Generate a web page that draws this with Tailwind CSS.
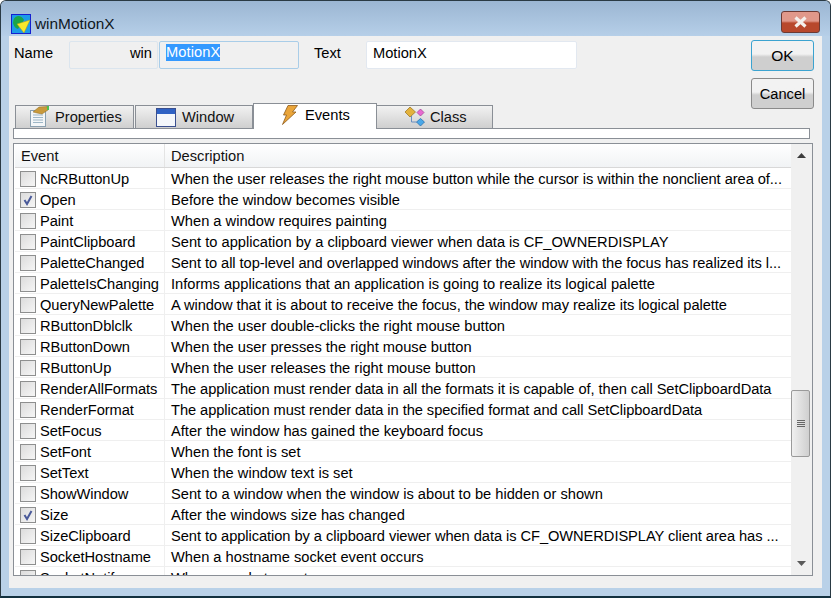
<!DOCTYPE html>
<html lang="en">
<head>
    <meta charset="UTF-8">
    <title>winMotionX</title>
    <script src="https://cdn.jsdelivr.net/npm/@tailwindcss/browser@4"></script>
</head>
<body class="w-[831px] h-[598px] overflow-hidden bg-white font-['Liberation_Sans',sans-serif] text-[14.67px] text-black">
    <!-- Window frame -->
    <div class="w-[831px] h-[598px] flex flex-col rounded-t-md border border-b-2 border-[#2a3a44] border-b-[#12313f] bg-[#b9d1e8] overflow-hidden">
        <!-- Title bar -->
        <div class="h-[35px] shrink-0 flex items-start justify-between pl-[10px] pr-[10px] bg-gradient-to-b from-[#9bb6d3] to-[#b6cfe8]">
            <div class="flex items-center gap-[4px] mt-[11px]">
                <svg width="20" height="20" viewBox="0 0 20 20">
                    <rect x="0.5" y="0.5" width="19" height="19" fill="#1c9be8" stroke="#1420d0" />
                    <path d="M2 9 Q2 3 7 2 Q11 2 13 6 L7 15 Q3 14 2 9Z" fill="#1aa54a" />
                    <path d="M6 10 L19 6 L13 19Z" fill="#f7e82a" stroke="#b09a10" stroke-width="0.5" />
                </svg>
                <span class="text-[15.4px] text-[#10181f]">winMotionX</span>
            </div>
            <div class="w-[39px] h-[22px] mt-[10px] rounded-[3px] border border-[#6b3a34] bg-gradient-to-b from-[#e0988a] from-45% to-[#b8482c] to-55% flex items-center justify-center">
                <svg width="15" height="12" viewBox="0 0 15 12">
                    <path d="M2.5 1.5 L12.5 10.5 M12.5 1.5 L2.5 10.5" stroke="#f4f0ec" stroke-width="3.2" />
                </svg>
            </div>
        </div>

        <!-- Client area -->
        <div class="ml-[8px] mr-[8px] mb-[8px] flex-1 bg-[#f0f0f0] flex flex-col pl-[4px] pr-[8px] min-h-0">
            <!-- Top fields and buttons -->
            <div class="h-[67px] shrink-0 flex items-start">
                <span class="w-[56px] pl-[1px] mt-[6px]">Name</span>
                <div class="w-[89px] h-[28px] mt-[5px] rounded-[2px] border border-[#dbe5ee] bg-[#f0f0f0] text-right pr-[5px] leading-[23px]">win</div>
                <div class="w-[140px] h-[28px] mt-[5px] ml-[1px] rounded-[2px] border border-[#a9cde8] bg-[#f0f0f0] pl-[6px] pt-[2px]"><span class="block w-fit bg-[#3399ff] text-white leading-[17px] tracking-[0.1px]">MotionX</span></div>
                <span class="w-[67px] pl-[15px] mt-[6px]">Text</span>
                <div class="w-[211px] h-[28px] mt-[5px] rounded-[2px] border border-[#e2e8f0] bg-white pl-[6px] leading-[23px]">MotionX</div>
                <div class="ml-auto flex flex-col gap-[7px] mt-[4px]">
                    <div class="w-[63px] h-[31px] rounded-[3px] border border-[#3ba3d0] bg-gradient-to-b from-[#f2f2f2] from-45% to-[#cfcfcf] to-55% flex items-center justify-center text-[15.5px]">OK</div>
                    <div class="w-[63px] h-[31px] rounded-[3px] border border-[#8a8a8a] bg-gradient-to-b from-[#f2f2f2] from-45% to-[#cfcfcf] to-55% flex items-center justify-center">Cancel</div>
                </div>
            </div>

            <!-- Tabs -->
            <div class="h-[25px] shrink-0 flex items-end pl-[2px]">
                <div class="w-[119px] h-[23px] flex items-center border border-b-0 border-[#8a8f96] bg-gradient-to-b from-[#f2f2f2] to-[#cfcfcf] pl-[13px] gap-[5px]">
                    <svg class="-mt-[2px]" width="21" height="21" viewBox="0 0 21 21">
                        <rect x="1.5" y="4.5" width="15" height="16" fill="#f3f6f8" stroke="#8aa0b0" />
                        <path d="M4 9H14M4 11.5H14M4 14H14M4 16.5H14" stroke="#9db6c6" />
                        <path d="M4 6 L10 1 L18 0.5 L19 4 L13 8 L8 7Z" fill="#c99a3c" stroke="#8d6a22" stroke-width="0.5" />
                        <rect x="18" y="0" width="2" height="4" fill="#4fc04f" />
                    </svg>
                    <span class="text-[#111]">Properties</span>
                </div>
                <div class="w-[118px] h-[23px] ml-[1px] flex items-center border border-b-0 border-[#8a8f96] bg-gradient-to-b from-[#f2f2f2] to-[#cfcfcf] pl-[20px] gap-[6px]">
                    <svg width="20" height="19" viewBox="0 0 20 19">
                        <rect x="0.5" y="0.5" width="19" height="18" fill="#f4f7fb" stroke="#3a4f8f" />
                        <rect x="1" y="1" width="18" height="5" fill="#2f62c4" />
                    </svg>
                    <span class="text-[#111]">Window</span>
                </div>
                <div class="w-[124px] h-[26px] -mb-[1px] relative flex items-center border border-b-0 border-[#8a8f96] bg-white pl-[27px] gap-[6px] pb-[3px]">
                    <svg width="18" height="20" viewBox="0 0 18 20">
                        <path d="M7 0.5 H16.5 L11.5 7 H15 L1.5 19.5 L5.5 10 H2.5Z" fill="#eaa53a" stroke="#8d5a1c" stroke-width="0.8" />
                    </svg>
                    <span>Events</span>
                </div>
                <div class="w-[116px] h-[23px] flex items-center border border-l-0 border-b-0 border-[#8a8f96] bg-gradient-to-b from-[#f2f2f2] to-[#cfcfcf] pl-[27px] gap-[4px]">
                    <svg class="-mt-[2px]" width="22" height="21" viewBox="0 0 22 21">
                        <path d="M6 1 L11.5 6 L6 11 L1 6Z" fill="#e3b23c" stroke="#96701a" stroke-width="0.7" />
                        <path d="M16.5 3 L20 6.5 L16.5 10 L13 6.5Z" fill="#e86ad0" stroke="#a03b92" stroke-width="0.7" />
                        <path d="M16.5 12.5 L20.5 16 L16.5 20 L12.5 16Z" fill="#4aa8e8" stroke="#2068a8" stroke-width="0.7" />
                        <path d="M7.5 10 V16 H13" fill="none" stroke="#6a8fc0" />
                    </svg>
                    <span class="text-[#111]">Class</span>
                </div>
            </div>

            <!-- Tab page strip -->
            <div class="h-[11px] shrink-0 w-[797px] border border-[#8a8f96] bg-white"></div>

            <!-- Event table -->
            <div class="mt-[4px] w-[800px] h-[433px] shrink-0 flex border border-[#8a8f96] bg-white overflow-hidden">
                <div class="flex-1 min-w-0 flex flex-col pl-[1px]">
                    <div class="h-[24px] shrink-0 flex items-center border-b border-[#d8d8d8] bg-gradient-to-b from-white to-[#f1f3f5]">
                        <div class="w-[150px] h-full pl-[6px] flex items-center border-r border-[#e4e4e4] text-[#111]">Event</div>
                        <div class="pl-[6px] text-[#111]">Description</div>
                    </div>
                    <div id="rows" class="flex-1 overflow-hidden"></div>
                </div>
                <!-- Scrollbar -->
                <div class="w-[21px] shrink-0 bg-[#f0f0f0] flex flex-col items-center relative">
                    <svg class="mt-[9px]" width="9" height="5" viewBox="0 0 9 5"><path d="M4.5 0 L9 5 H0Z" fill="#3c3c3c" /></svg>
                    <div class="absolute top-[246px] left-0 w-[19px] h-[67px] rounded-[2px] border border-[#9a9a9a] bg-gradient-to-r from-[#f0f0f0] to-[#cfcfcf] flex flex-col items-center justify-center gap-[1px]">
                        <div class="w-[8px] h-[1px] bg-[#666]"></div>
                        <div class="w-[8px] h-[1px] bg-[#666]"></div>
                        <div class="w-[8px] h-[1px] bg-[#666]"></div>
                        <div class="w-[8px] h-[1px] bg-[#666]"></div>
                    </div>
                    <svg class="absolute bottom-[9px]" width="9" height="5" viewBox="0 0 9 5"><path d="M0 0 H9 L4.5 5Z" fill="#5a5a5a" /></svg>
                </div>
            </div>
        </div>
    </div>

    <script>
        // Event name, description, checked
        const events = [
            ['NcRButtonUp', 'When the user releases the right mouse button while the cursor is within the nonclient area of...', false],
            ['Open', 'Before the window becomes visible', true],
            ['Paint', 'When a window requires painting', false],
            ['PaintClipboard', 'Sent to application by a clipboard viewer when data is CF_OWNERDISPLAY', false],
            ['PaletteChanged', 'Sent to all top-level and overlapped windows after the window with the focus has realized its l...', false],
            ['PaletteIsChanging', 'Informs applications that an application is going to realize its logical palette', false],
            ['QueryNewPalette', 'A window that it is about to receive the focus, the window may realize its logical palette', false],
            ['RButtonDblclk', 'When the user double-clicks the right mouse button', false],
            ['RButtonDown', 'When the user presses the right mouse button', false],
            ['RButtonUp', 'When the user releases the right mouse button', false],
            ['RenderAllFormats', 'The application must render data in all the formats it is capable of, then call SetClipboardData', false],
            ['RenderFormat', 'The application must render data in the specified format and call SetClipboardData', false],
            ['SetFocus', 'After the window has gained the keyboard focus', false],
            ['SetFont', 'When the font is set', false],
            ['SetText', 'When the window text is set', false],
            ['ShowWindow', 'Sent to a window when the window is about to be hidden or shown', false],
            ['Size', 'After the windows size has changed', true],
            ['SizeClipboard', 'Sent to application by a clipboard viewer when data is CF_OWNERDISPLAY client area has ...', false],
            ['SocketHostname', 'When a hostname socket event occurs', false],
            ['SocketNotify', 'When a socket event occurs', false]
        ];

        const tick = '<svg width="12" height="12" viewBox="0 0 12 12"><path d="M2.5 6 L5 10 L9.5 2" fill="none" stroke="#4a5a9a" stroke-width="2" /></svg>';

        // long descriptions run a little narrower in the original
        document.getElementById('rows').innerHTML = events.map(([name, desc, checked]) => `
            <div class="h-[21px] flex items-center border-b border-[#efefef] whitespace-nowrap">
                <div class="w-[150px] h-full shrink-0 flex items-center border-r border-[#efefef] pl-[5px] pt-[2px] gap-[4px] tracking-[-0.05px]">
                    <span class="w-[16px] h-[16px] shrink-0 flex items-center justify-center border border-[#8e8f8f] bg-gradient-to-br from-[#dcdcdc] to-[#f6f6f6]">${checked ? tick : ''}</span>
                    <span>${name}</span>
                </div>
                <div class="pl-[6px] pt-[2px] ${desc.length > 80 ? 'tracking-[-0.06px]' : ''}">${desc}</div>
            </div>`).join('');
    </script>
</body>
</html>
